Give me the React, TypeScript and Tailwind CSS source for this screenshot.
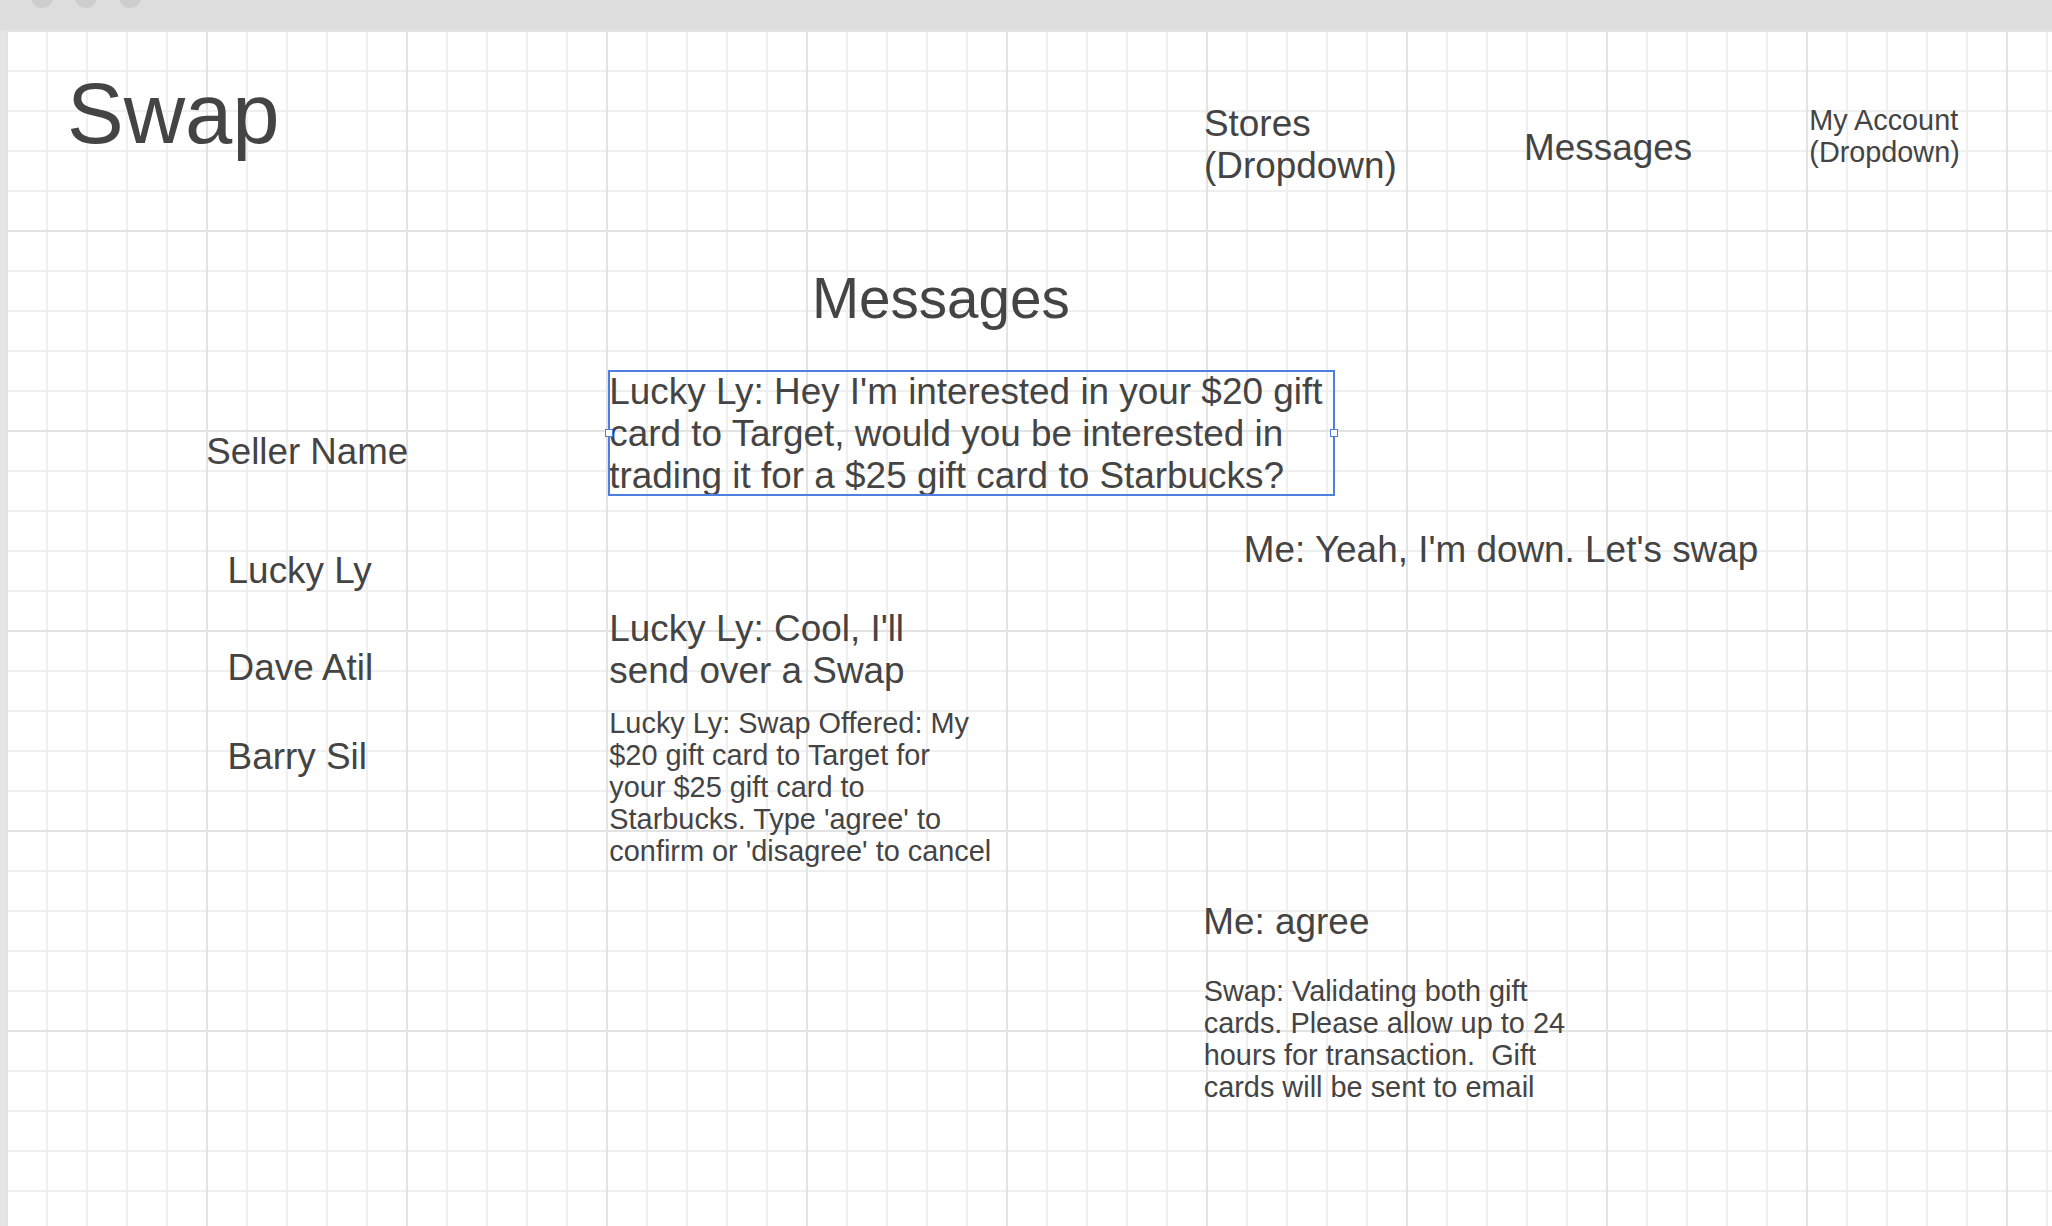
import React from "react";

const sellers = [
  { name: "Lucky Ly", gap: "mt-[76.7px]" },
  { name: "Dave Atil", gap: "mt-[55.3px]" },
  { name: "Barry Sil", gap: "mt-[46.3px]" },
];

function WindowDots() {
  return (
    <div className="h-[30px] shrink-0 bg-[#dddddd] flex items-start gap-[22px] pl-[31px]">
      <div className="size-[22px] -mt-[14px] rounded-full bg-[#cdcdcd]" />
      <div className="size-[22px] -mt-[14px] rounded-full bg-[#cdcdcd]" />
      <div className="size-[22px] -mt-[14px] rounded-full bg-[#cdcdcd]" />
    </div>
  );
}

function SelectedText() {
  return (
    <div className="relative w-[727px] h-[126px] mt-[38.4px] -ml-[1.3px]">
      <p className="pl-[1.3px] pt-[1.6px] text-[36.9px] leading-[42px] whitespace-nowrap">
        Lucky Ly: Hey I'm interested in your $20 gift
        <br />
        card to Target, would you be interested in
        <br />
        trading it for a $25 gift card to Starbucks?
      </p>
      {/* selection frame + handles */}
      <div className="absolute inset-0 border-2 border-[#4d7ee0]" />
      <div className="absolute left-[-3px] top-[59px] size-[8px] bg-white border-[1.5px] border-[#4d7ee0]" />
      <div className="absolute right-[-3px] top-[59px] size-[8px] bg-white border-[1.5px] border-[#4d7ee0]" />
    </div>
  );
}

export default function App() {
  return (
    <div className="w-[2052px] h-[1226px] overflow-hidden flex flex-col bg-white text-[#444444] font-['Liberation_Sans',Arial,sans-serif]">
      <WindowDots />

      <div className="flex flex-1">
        {/* page margin strip */}
        <div className="w-[6px] shrink-0 bg-[#e4e4e4]" />

        {/* canvas */}
        <div className="flex-1 flex flex-col [background-image:linear-gradient(to_right,#e3e3e3_2px,transparent_2px),linear-gradient(to_bottom,#e3e3e3_2px,transparent_2px),linear-gradient(to_right,#efefef_2px,transparent_2px),linear-gradient(to_bottom,#efefef_2px,transparent_2px)] [background-size:200px_200px,200px_200px,40px_40px,40px_40px]">
          {/* header */}
          <header className="h-[200px] shrink-0 flex items-start pl-[61px]">
            <div className="w-[1136px] mt-[36px] text-[85px] leading-[96px]">Swap</div>
            <div className="w-[320px] mt-[73.4px] pl-[1px] text-[36.9px] leading-[42px]">
              Stores
              <br />
              (Dropdown)
            </div>
            <div className="w-[285px] mt-[96.5px] pl-[1px] text-[36.9px] leading-[42px]">Messages</div>
            <div className="mt-[74.4px] pl-[1.3px] text-[28.8px] leading-[32px]">
              My Account
              <br />
              (Dropdown)
            </div>
          </header>

          {/* body */}
          <div className="flex flex-1 pl-[200.3px]">
            <aside className="w-[403px] shrink-0 flex flex-col pt-[201.4px]">
              <div className="text-[36.7px] leading-[42px]">Seller Name</div>
              {sellers.map((s) => (
                <div key={s.name} className={`${s.gap} ml-[21.3px] text-[36.9px] leading-[42px]`}>
                  {s.name}
                </div>
              ))}
            </aside>

            <main className="flex-1 flex flex-col items-start">
              <h1 className="mt-[37.3px] ml-[202.6px] text-[56.6px] leading-[64px]">Messages</h1>

              <SelectedText />

              <div className="mt-[33.3px] ml-[634.5px] text-[36.9px] leading-[42px] whitespace-nowrap">
                Me: Yeah, I'm down. Let's swap
              </div>

              <div className="mt-[37.1px] text-[36.9px] leading-[42px]">
                Lucky Ly: Cool, I'll
                <br />
                send over a Swap
              </div>

              <div className="mt-[15.3px] text-[28.9px] leading-[32px] whitespace-nowrap">
                Lucky Ly: Swap Offered: My
                <br />
                $20 gift card to Target for
                <br />
                your $25 gift card to
                <br />
                Starbucks. Type 'agree' to
                <br />
                confirm or 'disagree' to cancel
              </div>

              <div className="mt-[33.3px] ml-[594px] text-[36.9px] leading-[42px]">Me: agree</div>

              <div className="mt-[32.6px] ml-[594.4px] text-[28.9px] leading-[32px] whitespace-nowrap">
                Swap: Validating both gift
                <br />
                cards. Please allow up to 24
                <br />
                hours for transaction.&nbsp; Gift
                <br />
                cards will be sent to email
              </div>
            </main>
          </div>
        </div>
      </div>
    </div>
  );
}
